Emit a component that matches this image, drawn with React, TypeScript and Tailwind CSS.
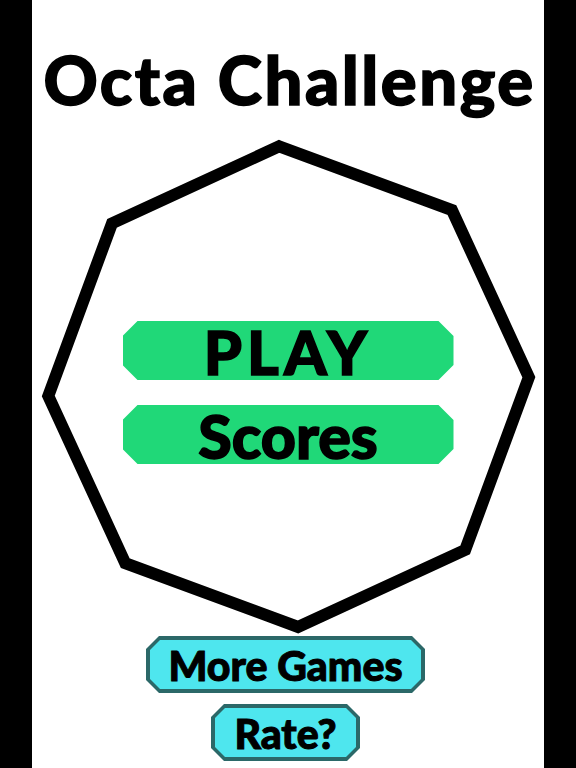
import React from 'react'

const octagon =
  '247.2,10.3 419.9,74 496.9,241.2 433.2,413.9 266,490.9 93.3,427.2 16.3,260 80,87.3'

function GreenButton({ label, tracking }: { label: string; tracking: string }) {
  return (
    <div className="w-[331px] h-[59px] bg-[#20d878] flex items-center justify-center [clip-path:polygon(15px_0,calc(100%_-_15px)_0,100%_15px,100%_calc(100%_-_15px),calc(100%_-_15px)_100%,15px_100%,0_calc(100%_-_15px),0_15px)]">
      <span
        className={`text-[61px] leading-none font-black text-black ${tracking} [-webkit-text-stroke:1.5px_black] [font-family:Lato,'Open_Sans',sans-serif] mt-[2px]`}
      >
        {label}
      </span>
    </div>
  )
}

function CyanButton({ label, width }: { label: string; width: string }) {
  return (
    <div
      className={`${width} h-[57px] bg-[#2b6868] p-[4px] [clip-path:polygon(13px_0,calc(100%_-_13px)_0,100%_13px,100%_calc(100%_-_13px),calc(100%_-_13px)_100%,13px_100%,0_calc(100%_-_13px),0_13px)]`}
    >
      <div className="w-full h-full bg-[#4ee6ee] flex items-center justify-center [clip-path:polygon(10px_0,calc(100%_-_10px)_0,100%_10px,100%_calc(100%_-_10px),calc(100%_-_10px)_100%,10px_100%,0_calc(100%_-_10px),0_10px)]">
        <span className="text-[41px] leading-none font-black text-black [-webkit-text-stroke:1px_black] [font-family:Lato,'Open_Sans',sans-serif] mt-[1px]">
          {label}
        </span>
      </div>
    </div>
  )
}

export default function App() {
  return (
    <div className="w-[576px] h-[768px] flex bg-black overflow-hidden">
      {/* left bar */}
      <div className="w-[32px] h-full bg-black" />

      {/* main column */}
      <div className="w-[512px] h-full bg-white flex flex-col">
        {/* Title */}
        <div className="h-[136px] flex items-start justify-center pt-[46px] pl-[3px]">
          <h1 className="text-[67px] leading-none font-black text-black tracking-[2.5px] [-webkit-text-stroke:1.5px_black] [font-family:Lato,'Open_Sans',sans-serif]">
            Octa Challenge
          </h1>
        </div>

        {/* Octagon with main buttons */}
        <div className="relative h-[500px] flex flex-col items-center pt-[185px] gap-[25px]">
          <svg
            className="absolute inset-0"
            width="512"
            height="500"
            viewBox="0 0 512 500"
          >
            <polygon
              points={octagon}
              fill="none"
              stroke="#000"
              strokeWidth="12"
              strokeLinejoin="miter"
            />
          </svg>
          <div className="relative">
            <GreenButton label="PLAY" tracking="tracking-[5px]" />
          </div>
          <div className="relative">
            <GreenButton label="Scores" tracking="tracking-[0px]" />
          </div>
        </div>

        {/* Secondary buttons */}
        <div className="flex flex-col items-center gap-[11px] pr-[5px]">
          <CyanButton label="More Games" width="w-[279px]" />
          <CyanButton label="Rate?" width="w-[149px]" />
        </div>
      </div>

      {/* right bar */}
      <div className="w-[32px] h-full bg-black" />
    </div>
  )
}
